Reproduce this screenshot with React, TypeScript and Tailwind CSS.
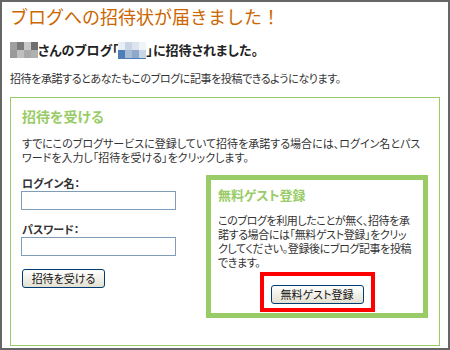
import React from 'react';

const jp = { fontFamily: '"Noto Sans CJK JP", "Noto Sans", sans-serif' };

function Mosaic({ top, bottom }: { top: string[]; bottom: string[] }) {
    return (
        <span className="inline-flex flex-col align-middle">
            <span className="flex">
                {top.map((c, i) => (
                    <span key={i} className="w-[7px] h-[8px]" style={{ background: c }} />
                ))}
            </span>
            <span className="flex">
                {bottom.map((c, i) => (
                    <span key={i} className="w-[7px] h-[8px]" style={{ background: c }} />
                ))}
            </span>
        </span>
    );
}

export default function App() {
    return (
        <div style={jp} className="w-[450px] h-[350px] bg-white border-2 border-[#666666] px-[8px] text-[#333333] [font-feature-settings:'palt'] overflow-hidden">
            {/* Header */}
            <h1 className="pt-[3px] text-[18px] leading-[22px] text-[#cc6600] [font-feature-settings:normal]">ブログへの招待状が届きました！</h1>
            <p className="mt-[13px] flex items-center text-[13px] leading-[18px] font-bold text-[#222222]">
                <Mosaic top={['#a0a0a0', '#7a7a7a', '#c8c8c8', '#6e6e6e']} bottom={['#9a9a9a', '#c0c0c0', '#a8a8a8', '#b0b0b0']} />
                <span>さんのブログ「</span>
                <span className="border-b border-[#4f7db5]">
                    <Mosaic top={['#e8eef5', '#c8d4e4', '#dde4ee', '#f0f3f8']} bottom={['#4f7db5', '#a8bcd6', '#8fa9cb', '#c9d6e6']} />
                </span>
                <span>」に招待されました。</span>
            </p>
            <p className="mt-[12px] text-[11px] leading-[14px] tracking-[-0.4px]">招待を承諾するとあなたもこのブログに記事を投稿できるようになります。</p>

            {/* Invite box */}
            <div className="mt-[12px] h-[249px] border border-[#99cc66] px-[11px] pt-[9px]">
                <h2 className="text-[14px] leading-[18px] font-bold text-[#99cc66]">招待を受ける</h2>
                <p className="mt-[11px] text-[11px] leading-[14px] whitespace-nowrap">
                    すでにこのブログサービスに登録していて招待を承諾する場合には、ログイン名とパス
                    <br />
                    ワードを入力し「招待を受ける」をクリックします。
                </p>
                <div className="mt-[12px] flex items-start gap-[30px]">
                    <div className="flex flex-col">
                        <label className="text-[11px] leading-[14px] font-bold">ログイン名：</label>
                        <input className="mt-[1px] -ml-[1px] w-[155px] h-[19px] border border-[#7f9db9] bg-white outline-none" />
                        <label className="mt-[12px] text-[11px] leading-[14px] font-bold">パスワード：</label>
                        <input type="password" className="mt-[1px] -ml-[1px] w-[155px] h-[19px] border border-[#7f9db9] bg-white outline-none" />
                        <button className="mt-[13px] w-[83px] h-[19px] rounded-[3px] border border-[#003c74] bg-gradient-to-b from-white to-[#e3e0d2] text-[11px] leading-[17px] text-[#111111]">
                            招待を受ける
                        </button>
                    </div>

                    {/* Guest signup */}
                    <div className="mt-[-1px] w-[224px] h-[143px] border-[5px] border-[#99cc66] px-[7px] pt-[6px]">
                        <h3 className="text-[13px] leading-[18px] font-bold text-[#99cc66]">無料ゲスト登録</h3>
                        <p className="mt-[9px] text-[11px] leading-[14px] whitespace-nowrap tracking-[-0.4px]">
                            このブログを利用したことが無く、招待を承
                            <br />
                            諾する場合には「無料ゲスト登録」をクリッ
                            <br />
                            クしてください。登録後にブログ記事を投稿
                            <br />
                            できます。
                        </p>
                        <div className="mt-[3px] flex justify-center">
                            <div className="border-4 border-[#ff0000] px-[7px] py-[4px]">
                                <button className="w-[93px] h-[19px] rounded-[3px] border border-[#003c74] bg-gradient-to-b from-white to-[#e3e0d2] text-[11px] leading-[17px] text-[#111111]">
                                    無料ゲスト登録
                                </button>
                            </div>
                        </div>
                    </div>
                </div>
            </div>
        </div>
    );
}
